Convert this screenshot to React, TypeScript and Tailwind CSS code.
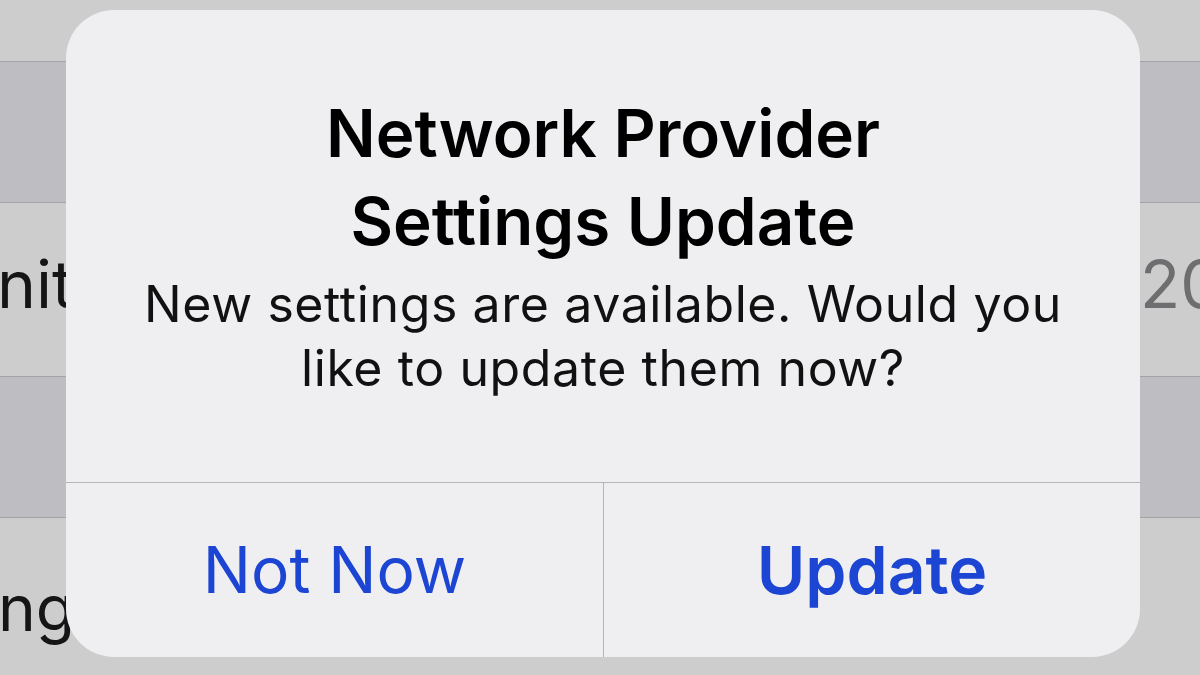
import React from "react";

export default function App() {
  return (
    <div className="relative w-[1200px] h-[675px] overflow-hidden bg-[#cdcdcd] font-['Inter','Noto_Sans',sans-serif]">
      {/* background list */}
      <div className="flex flex-col w-full h-full">
        <div className="h-[61px] bg-[#cdcdcd]" />
        <div className="h-px bg-[#a3a3a6]" />
        <div className="h-[140px] bg-[#bebec2]" />
        <div className="h-px bg-[#a3a3a6]" />
        <div className="h-[173px] bg-[#cdcdcd] flex items-start justify-between pt-[48px]">
          <span className="ml-[-52px] text-[66px] leading-[66px] text-[#151515] whitespace-nowrap">Unit</span>
          <div className="w-[60px] overflow-hidden">
            <span className="text-[66px] leading-[66px] text-[#6e6e70] whitespace-nowrap">2021</span>
          </div>
        </div>
        <div className="h-px bg-[#a3a3a6]" />
        <div className="h-[140px] bg-[#bebec2]" />
        <div className="h-px bg-[#a3a3a6]" />
        <div className="flex-1 bg-[#cdcdcd] flex items-start pt-[58px]">
          <span className="ml-[-2px] text-[64px] leading-[64px] text-[#151515] whitespace-nowrap">ng</span>
        </div>
      </div>

      {/* alert overlay */}
      <div className="absolute left-[66px] top-[10px] w-[1074px] h-[647px] rounded-[48px] bg-[#efeff1] flex flex-col overflow-hidden">
        <div className="h-[472px] flex flex-col items-center pt-[80px]">
          <div className="text-[65.5px] leading-[88px] font-semibold text-black text-center">
            Network Provider
            <br />
            Settings Update
          </div>
          <div className="mt-[6px] text-[50px] leading-[64px] text-[#111] text-center tracking-[0.6px]">
            New settings are available. Would you
            <br />
            like to update them now?
          </div>
        </div>
        <div className="h-px bg-[#b5b5b8]" />
        <div className="flex-1 flex">
          <div className="flex-1 flex items-center justify-center text-[64px] text-[#1c45d3]">
            Not Now
          </div>
          <div className="w-px bg-[#b5b5b8]" />
          <div className="w-[536px] flex items-center justify-center text-[66px] font-semibold text-[#1c45d3]">
            Update
          </div>
        </div>
      </div>
    </div>
  );
}
